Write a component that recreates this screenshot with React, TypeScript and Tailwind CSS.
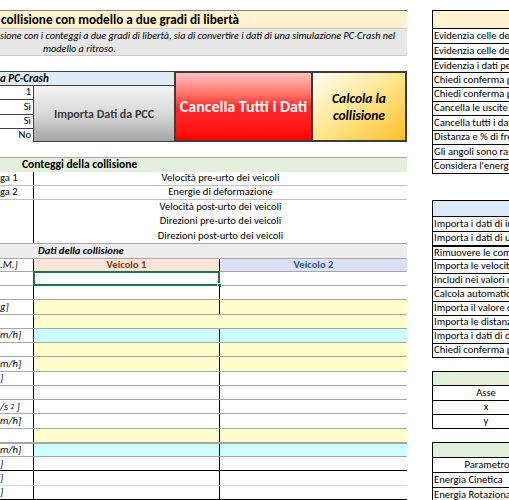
import React from "react";

type DataRow = {
  label?: React.ReactNode;
  bg: string;
  merged?: boolean;
  top?: string;
  selected?: boolean;
};

const dataRows: DataRow[] = [
  { bg: "bg-white", selected: true },
  { bg: "bg-white" },
  { label: "g]", bg: "bg-[#ffffcc]" },
  { bg: "bg-[#ffffcc]", merged: true },
  { label: "m/h]", bg: "bg-[#ccffff]" },
  { bg: "bg-[#ffffcc]" },
  { label: "m/h]", bg: "bg-[#ffffcc]" },
  { label: "]", bg: "bg-white" },
  { bg: "bg-white" },
  {
    label: (
      <span>
        /s <sup className="text-[7px] relative -top-[1px]">2</sup> ]
      </span>
    ),
    bg: "bg-white",
  },
  { label: "m/h]", bg: "bg-white" },
  { bg: "bg-[#ffffcc]" },
  { label: "m/h]", bg: "bg-[#ccffff]", top: "border-t-2 border-[#a6a6a6]" },
  { label: "]", bg: "bg-white" },
  { label: "]", bg: "bg-white", top: "border-t border-black" },
  { label: "]", bg: "bg-white", top: "border-t border-[#d9d9d9]" },
];

const optionsA = [
  "Evidenzia celle dei dati di input",
  "Evidenzia celle dei risultati",
  "Evidenzia i dati personalizzati",
  "Chiedi conferma prima di importare",
  "Chiedi conferma prima di calcolare",
  "Cancella le uscite prima del calcolo",
  "Cancella tutti i dati",
  "Distanza e % di frenata",
  "Gli angoli sono rappresentati in gradi",
  "Considera l'energia rotazionale",
];

const optionsB = [
  "Importa i dati di input",
  "Importa i dati di uscita",
  "Rimuovere le componenti",
  "Importa le velocità",
  "Includi nei valori di uscita",
  "Calcola automaticamente",
  "Importa il valore di attrito",
  "Importa le distanze",
  "Importa i dati di deformazione",
  "Chiedi conferma prima di importare",
];

function OptionBox({
  head,
  headH,
  rowH,
  items,
  className = "",
}: {
  head: string;
  headH: string;
  rowH: string;
  items: string[];
  className?: string;
}) {
  return (
    <div className={`border border-black w-[150px] ${className}`}>
      <div className={`${headH} ${head} border-b border-black`} />
      {items.map((t, i) => (
        <div
          key={i}
          className={`${rowH} flex items-center pl-[1px] whitespace-nowrap overflow-hidden ${
            i > 0 ? (i === 2 ? "border-t-2 border-black" : "border-t border-black") : ""
          }`}
        >
          {t}
        </div>
      ))}
    </div>
  );
}

export default function App() {
  return (
    <div className="w-[509px] h-[500px] overflow-hidden bg-white flex text-black font-['Carlito','Liberation_Sans_Narrow',Lato,sans-serif] text-[10.6px] leading-none">
      {/* main sheet column */}
      <div className="w-[407px] shrink-0 pt-[10px] flex flex-col">
        <div className="h-[18px] bg-[#fff2cc] border-t border-[#7f7f7f] flex items-center pl-[1px] font-bold text-[13.2px] whitespace-nowrap overflow-hidden">
          collisione con modello a due gradi di libertà
        </div>
        <div className="h-[28px] bg-[#e7e6e6] border-t border-[#c8c8c8] border-b border-[#7f7f7f] italic text-[10.2px] flex flex-col justify-center gap-[1px] leading-[12px] whitespace-nowrap overflow-hidden">
          <div>
            sione con i conteggi a due gradi di libertà, sia di convertire i dati di una simulazione PC-Crash nel
          </div>
          <div className="pl-[43px]">modello a ritroso.</div>
        </div>

        {/* import and action buttons */}
        <div className="mt-[15px] h-[71px] flex">
          <div className="w-[174px] flex flex-col">
            <div className="h-[15px] bg-[#ddebf7] border-t border-[#404040] border-b border-[#404040] flex items-center font-bold italic text-[11px]">
              a PC-Crash
            </div>
            <div className="flex-1 flex">
              <div className="w-[34px] flex flex-col border-r border-[#404040]">
                {["1", "Sì", "Sì", "No"].map((v, i) => (
                  <div
                    key={i}
                    className={`flex-1 flex items-center justify-end pr-[2px] ${
                      i < 3 ? "border-b border-[#404040]" : ""
                    }`}
                  >
                    {v}
                  </div>
                ))}
              </div>
              <div className="flex-1 flex items-center justify-center bg-gradient-to-b from-[#f4f4f4] via-[#d9d9d9] to-[#a5a5a5] border-b border-[#404040] font-bold text-[12px] text-[#3a3a3a]">
                Importa Dati da PCC
              </div>
            </div>
          </div>
          <div className="w-[139px] flex items-center justify-center border-2 border-[#3c3c3c] bg-gradient-to-b from-[#ffc0c0] via-[#ff2a2a] to-[#ff0000] text-white font-bold text-[16px]">
            Cancella Tutti i Dati
          </div>
          <div className="flex-1 flex flex-col items-center justify-center border-2 border-l-0 border-[#3c3c3c] bg-gradient-to-br from-[#fffdf5] via-[#ffe58a] to-[#ffc000] font-bold italic text-[13.5px] leading-[17px]">
            <span>Calcola la</span>
            <span>collisione</span>
          </div>
        </div>

        {/* collision counters */}
        <div className="mt-[15px] h-[15px] bg-[#e2efda] border-t border-[#a6a6a6] flex items-center pl-[22px] font-bold text-[11.5px]">
          Conteggi della collisione
        </div>
        <div className="flex flex-col border-b border-[#a6a6a6]">
          {[
            ["ga 1", "Velocità pre-urto dei veicoli"],
            ["ga 2", "Energie di deformazione"],
            ["", "Velocità post-urto dei veicoli"],
            ["", "Direzioni pre-urto dei veicoli"],
            ["", "Direzioni post-urto dei veicoli"],
          ].map(([l, t], i) => (
            <div
              key={i}
              className={`h-[14.2px] flex ${i < 2 ? "border-b border-[#bfbfbf]" : ""}`}
            >
              <div className="w-[34px] border-r border-black flex items-center">{l}</div>
              <div className="flex-1 flex items-center justify-center">{t}</div>
            </div>
          ))}
        </div>

        {/* collision data table */}
        <div className="h-[14px] bg-[#ededed] flex items-center pl-[38px] font-bold italic">
          Dati della collisione
        </div>
        <div className="h-[13px] flex border-t border-[#a6a6a6]">
          <div className="w-[34px] border-r border-black flex items-center italic">.M.]</div>
          <div className="w-[186px] border-r border-black bg-[#fce4d6] text-[#843c0c] font-bold flex items-center justify-center">
            Veicolo 1
          </div>
          <div className="flex-1 bg-[#d9e1f2] text-[#2f5597] font-bold flex items-center justify-center">
            Veicolo 2
          </div>
        </div>
        <div className="flex flex-col border-b border-black">
          {dataRows.map((r, i) => (
            <div
              key={i}
              className={`h-[14.25px] flex ${r.top ?? "border-t border-[#a6a6a6]"}`}
            >
              <div className="w-[34px] border-r border-black flex items-center italic whitespace-nowrap">
                {r.label}
              </div>
              {r.merged ? (
                <div className={`flex-1 ${r.bg}`} />
              ) : (
                <>
                  <div className={`w-[186px] border-r border-black relative ${r.bg}`}>
                    {r.selected && (
                      <>
                        <div className="absolute -inset-[1px] border-2 border-[#217346]" />
                        <div className="absolute -right-[3px] -bottom-[3px] w-[5px] h-[5px] bg-[#217346] border border-white" />
                      </>
                    )}
                  </div>
                  <div className={`flex-1 ${r.bg}`} />
                </>
              )}
            </div>
          ))}
        </div>
      </div>

      {/* options panels */}
      <div className="w-[150px] shrink-0 ml-[25px] pt-[10px] flex flex-col">
        <OptionBox head="bg-[#fff2cc]" headH="h-[18px]" rowH="h-[14.4px]" items={optionsA} />
        <OptionBox
          className="mt-[26px]"
          head="bg-[#ddebf7]"
          headH="h-[16px]"
          rowH="h-[14px]"
          items={optionsB}
        />
        <div className="mt-[13px] border border-black w-[108px]">
          <div className="h-[14px] bg-[#e2efda] border-b border-black" />
          {["Asse", "x", "y"].map((t, i) => (
            <div
              key={i}
              className={`h-[14px] flex items-center justify-center ${i > 0 ? "border-t border-black" : ""}`}
            >
              {t}
            </div>
          ))}
        </div>
        <div className="mt-[13px] border border-black w-[150px] flex">
          <div className="w-[108px] flex flex-col">
            <div className="h-[15px] bg-[#e2efda] border-b border-black" />
            <div className="h-[15px] flex items-center justify-center border-b border-black">
              Parametro
            </div>
            <div className="h-[15px] flex items-center pl-[1px] whitespace-nowrap border-b border-black">
              Energia Cinetica
            </div>
            <div className="h-[15px] flex items-center pl-[1px] whitespace-nowrap">
              Energia Rotazionale
            </div>
          </div>
        </div>
      </div>
    </div>
  );
}
